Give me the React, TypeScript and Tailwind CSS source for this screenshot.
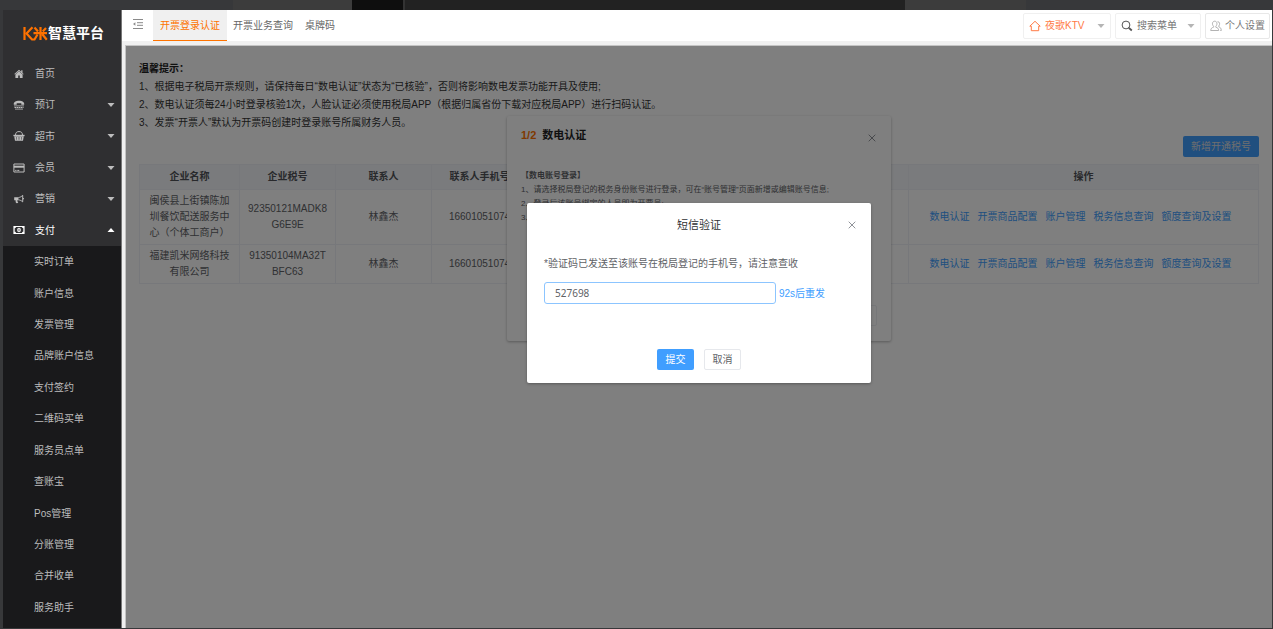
import React from 'react';

const menu = [
  { label: '首页', icon: HomeIcon },
  { label: '预订', icon: PhoneIcon, arrow: true },
  { label: '超市', icon: BasketIcon, arrow: true },
  { label: '会员', icon: CardIcon, arrow: true },
  { label: '营销', icon: HornIcon, arrow: true },
  { label: '支付', icon: MoneyIcon, arrow: true, open: true },
];

const payMenu = [
  '实时订单', '账户信息', '发票管理', '品牌账户信息', '支付签约', '二维码买单',
  '服务员点单', '查账宝', 'Pos管理', '分账管理', '合并收单', '服务助手',
];

const companies = [
  { name: '闽侯县上街镇陈加圳餐饮配送服务中心（个体工商户）', taxNo: '92350121MADK8G6E9E', contact: '林鑫杰', phone: '16601051074' },
  { name: '福建凯米网络科技有限公司', taxNo: '91350104MA32TBFC63', contact: '林鑫杰', phone: '16601051074' },
];

const actions = ['数电认证', '开票商品配置', '账户管理', '税务信息查询', '额度查询及设置'];

export default function App() {
  return (
    <div className="flex min-h-screen flex-col bg-[#37383a] pr-px pb-px pl-[3px] font-['Liberation_Sans','Noto_Sans_CJK_SC',sans-serif] text-[10px]">
      <WindowStrip />
      <div className="flex grow">
        <Sidebar />
        <div className="flex min-w-0 grow flex-col bg-[#f0f0f0]">
          <Header />
          <main className="relative mt-1 ml-[3px] grow border-t border-l border-[#c4c4c4] bg-white">
            <InvoicePage />
            <AuthDialog />
            <div className="absolute inset-0 bg-black/50" />
            <SmsDialog />
          </main>
        </div>
      </div>
    </div>
  );
}

function WindowStrip() {
  return (
    <div className="-mr-px -ml-[3px] flex h-[10px] bg-[#37383a]">
      <div className="w-[233px]" />
      <div className="w-[119px] bg-[#3c3c3c]" />
      <div className="w-[51px] bg-[#0e0e0e]" />
      <div className="w-[2px] bg-[#333]" />
      <div className="w-[500px] bg-[#222]" />
      <div className="w-[121px] bg-[#3c3c3c]" />
    </div>
  );
}

function Sidebar() {
  return (
    <aside className="w-[119px] shrink-0 border-r border-[#777] bg-[#19191b]">
      <div className="bg-[#2f2f31]">
        <div className="flex h-12 items-center pb-[2px] pl-5">
          <Logo />
          <span className="text-[14px] font-bold text-white">智慧平台</span>
        </div>
        <ul className="grid h-[188px]">
          {menu.map(({ label, icon: Icon, arrow, open }) => (
            <li key={label} className="grid">
              <button type="button" className={`flex items-center pr-[6px] pl-[10px] ${open ? 'text-white' : 'text-[#bdbdbd]'}`}>
                <Icon />
                <span className="ml-[10px] grow text-left">{label}</span>
                {arrow && <Caret className={open ? 'rotate-180' : ''} />}
              </button>
            </li>
          ))}
        </ul>
      </div>
      <ul className="grid h-[377px]">
        {payMenu.map((label) => (
          <li key={label} className="grid">
            <a href="#" className="flex items-center pl-[31px] text-[#bdbdbd]">{label}</a>
          </li>
        ))}
      </ul>
    </aside>
  );
}

function Header() {
  return (
    <header className="flex h-[31px] items-center bg-white text-[#666]">
      <button type="button" aria-label="收起菜单" className="flex w-[31px] justify-center pb-1">
        <svg viewBox="0 0 12 12" className="size-3" fill="none" stroke="#8a8a8a">
          <path d="M1 1.5h10M5 4.7h6M5 7.3h6M1 10.5h10" />
          <path d="M3.4 4.2v3.6L1 6z" fill="#8a8a8a" stroke="none" />
        </svg>
      </button>
      <nav className="flex h-full grow">
        <a href="#" className="flex items-center border-b border-[#fe7300] bg-[#f0f0f0] px-[7px] text-[#fe7300]">开票登录认证</a>
        <a href="#" className="flex items-center px-[6px]">开票业务查询</a>
        <a href="#" className="flex items-center px-[6px]">桌牌码</a>
      </nav>
      <div className="flex gap-1 pr-[2px]">
        <button type="button" className="flex h-[26px] w-[88px] items-center rounded-xs border border-[#f0f0f0] px-[5px] text-[#ff7a45]">
          <svg viewBox="0 0 12 12" className="size-3" fill="none" stroke="currentColor">
            <path d="M.8 6.200 6 1.300l5.200 4.900H9.700v4.500H2.300V6.200z" strokeLinejoin="round" />
          </svg>
          <span className="ml-1 grow text-left">夜歌KTV</span>
          <Caret className="text-[#b5b5b5]" />
        </button>
        <button type="button" className="flex h-[26px] w-[86px] items-center rounded-xs border border-[#f0f0f0] px-[5px] text-[#777]">
          <svg viewBox="0 0 12 12" className="size-3" fill="none" stroke="#555">
            <circle cx="5" cy="5" r="3.900" />
            <path d="m7 7.500.9.4" />
            <path d="M8 8l2.800 2.500" strokeWidth="1.700" />
          </svg>
          <span className="ml-1 grow text-left">搜索菜单</span>
          <Caret className="text-[#b5b5b5]" />
        </button>
        <button type="button" className="flex h-[26px] items-center rounded-xs border border-[#e8e8e8] px-1 text-[#777]">
          <svg viewBox="0 0 12 12" className="mr-[3px] size-3" fill="none" stroke="#aaa" strokeWidth=".9">
            <path d="M3.600 6.300v.9C1.800 7.600.9 8.400.7 10.500h8c-.2-2.100-1.100-2.900-2.900-3.300v-.9C7.700 4.400 7.200 1.200 4.700 1.200S1.700 4.400 3.600 6.300z" />
            <path d="M7.600 1.600c2.200 0 2.600 2.800 1.200 4.400v.8c1.600.5 2.400 1.600 2.500 3.700h-1" />
          </svg>
          个人设置
        </button>
      </div>
    </header>
  );
}

function InvoicePage() {
  return (
    <div className="px-[13px] pt-[14px]">
      <div className="leading-[18px] text-[#333]">
        <p className="font-bold text-[#222]">温馨提示：</p>
        <p>1、根据电子税局开票规则，请保持每日“数电认证”状态为“已核验”，否则将影响数电发票功能开具及使用;</p>
        <p>2、数电认证须每24小时登录核验1次，人脸认证必须使用税局APP（根据归属省份下载对应税局APP）进行扫码认证。</p>
        <p>3、发票“开票人”默认为开票码创建时登录账号所属财务人员。</p>
      </div>
      <div className="mt-1 flex justify-end">
        <button type="button" className="h-[21px] rounded-xs bg-[#409eff] px-2 text-[#ddd]">新增开通税号</button>
      </div>
      <table className="mt-[7px] w-full table-fixed border-collapse text-center leading-4 text-[#606266]">
        <colgroup>
          <col className="w-[100px]" />
          <col className="w-24" />
          <col className="w-24" />
          <col className="w-24" />
          <col />
          <col className="w-[350px]" />
        </colgroup>
        <thead>
          <tr className="h-[25px] bg-[#f5f7fa] text-[#505358]">
            {['企业名称', '企业税号', '联系人', '联系人手机号', '', '操作'].map((title) => (
              <th key={title} className="border border-[#eff1f6] whitespace-nowrap">{title}</th>
            ))}
          </tr>
        </thead>
        <tbody>
          {companies.map((row) => (
            <tr key={row.taxNo}>
              <td className="border border-[#eff1f6] px-[9px] py-[3px]">{row.name}</td>
              <td className="border border-[#eff1f6] px-[7px] break-all">{row.taxNo}</td>
              <td className="border border-[#eff1f6]">{row.contact}</td>
              <td className="border border-[#eff1f6]">{row.phone}</td>
              <td className="border border-[#eff1f6]" />
              <td className="border border-[#eff1f6] pr-[6px]">
                <div className="flex justify-center gap-2 text-[#409eff]">
                  {actions.map((action) => (
                    <a key={action} href="#">{action}</a>
                  ))}
                </div>
              </td>
            </tr>
          ))}
        </tbody>
      </table>
    </div>
  );
}

/* First step dialog, stays behind the SMS check */
function AuthDialog() {
  return (
    <section className="absolute top-[70px] left-1/3 ml-[-1px] h-[225px] w-96 rounded-xs bg-white px-[14px] pt-[11px] shadow-[0_1px_3px_rgba(0,0,0,0.3)]">
      <div className="flex items-start justify-between">
        <h2 className="text-[11px] leading-4 font-bold text-[#222]">
          <span className="mr-[6px] text-[#fe7300]">1/2</span>数电认证
        </h2>
        <button type="button" aria-label="关闭" className="mt-[7px] mr-px">
          <CloseIcon />
        </button>
      </div>
      <div className="mt-[26px] text-[8px] leading-[14px] text-[#606266]">
        <p className="font-bold">【数电账号登录】</p>
        <p>1、请选择税局登记的税务身份账号进行登录，可在“账号管理”页面新增或编辑账号信息;</p>
        <p>2、登录后该账号绑定的人员即为开票员;</p>
        <p>3、</p>
      </div>
      <div className="mt-20 flex justify-end">
        <button type="button" aria-label="取消" className="h-[21px] w-[37px] rounded-xs border border-[#eceef2]" />
      </div>
    </section>
  );
}

function SmsDialog() {
  return (
    <section role="dialog" aria-labelledby="sms-title" className="absolute top-[157px] left-[401px] w-[344px] rounded-xs bg-white px-[17px] pt-[14px] pb-[13px] text-[#606266] shadow-[0_1px_3px_rgba(0,0,0,0.3)]">
      <h2 id="sms-title" className="text-center text-[11px] leading-4 text-[#303133]">短信验证</h2>
      <button type="button" aria-label="关闭" className="absolute top-[18px] right-[15px]">
        <CloseIcon />
      </button>
      <label htmlFor="sms-code" className="mt-[23px] block leading-4">*验证码已发送至该账号在税局登记的手机号，请注意查收</label>
      <div className="mt-[10px] flex items-center gap-[3px]">
        <input id="sms-code" defaultValue="527698" className="h-[22px] w-[232px] rounded-[3px] border border-[#8cc5ff] px-[10px] font-['Noto_Sans',sans-serif] outline-none" />
        <button type="button" className="text-[#409eff]">92s后重发</button>
      </div>
      <div className="mt-[45px] flex justify-center gap-[10px]">
        <button type="button" className="h-[21px] w-[37px] rounded-xs bg-[#409eff] text-white">提交</button>
        <button type="button" className="h-[21px] w-[37px] rounded-xs border border-[#e6e8ec]">取消</button>
      </div>
    </section>
  );
}

function Logo() {
  return (
    <svg viewBox="0 0 25 15" className="h-[15px] w-[25px]" fill="none" stroke="#ff7200" strokeWidth="2.200">
      <path d="M1.500 1v13" />
      <path d="M9.500 1.200 3.500 7.500 9 13.500h2.500l3-5" />
      <path d="M10.500 7.200H24M17.500 1v13M11.500 1.500l3.500 4M23 2l-3.200 3.500M23.800 13.800l-4.500-5.500" />
    </svg>
  );
}

function MenuIcon({ children }: { children: React.ReactNode }) {
  return (
    <svg viewBox="0 0 12 10" className="h-[10px] w-3" fill="none" stroke="currentColor">
      {children}
    </svg>
  );
}

function HomeIcon() {
  return (
    <MenuIcon>
      <path d="M6 .8 1.300 5l.6.6L6 2l4.100 3.600.6-.6L9.500 3.900V1.300H8.200v1.400z" fill="currentColor" stroke="none" />
      <path d="M6 2.200 2.400 5.400V9h2.800V6.500h1.600V9h2.800V5.400z" fill="currentColor" stroke="none" />
    </MenuIcon>
  );
}

function PhoneIcon() {
  return (
    <MenuIcon>
      <path d="M.8 4.800C.3 1.800 3 .7 6 .7s5.700 1.100 5.200 4.100H8.300V3.200H3.700v1.600z" fill="currentColor" stroke="none" />
      <path d="M1.200 5.900h9.600M1.500 7.500h9M2.200 9.100h7.600" strokeDasharray="1.600 .4" />
    </MenuIcon>
  );
}

function BasketIcon() {
  return (
    <MenuIcon>
      <path d="M2.500 4C2.700 1.500 3.700.6 6 .6S9.300 1.500 9.500 4" />
      <path d="M.4 3.800h11.200v1.400H.4z" fill="currentColor" stroke="none" />
      <path d="M1.200 5.200h9.600L10 9.700H2zM3.400 6v2.700h.5V6zm2.300 0v2.700h.6V6zm2.400 0v2.700h.5V6z" fill="currentColor" fillRule="evenodd" stroke="none" />
    </MenuIcon>
  );
}

function CardIcon() {
  return (
    <MenuIcon>
      <path d="M.9 1h10.200v8H.9zM2.200 7.400h1.300M4.300 7.400h2" />
      <path d="M.9 2.700h10.200v2H.9z" fill="currentColor" stroke="none" />
    </MenuIcon>
  );
}

function HornIcon() {
  return (
    <MenuIcon>
      <path d="M1.200 3.200h4.300v3H4.400c-.2 1 .3 1.600.9 2.300-.6.8-2 .8-2.400.2C2.700 8 2.500 7.200 2.600 6.200H1.200z" fill="currentColor" stroke="none" />
      <path d="M5.500 3.500c1.700-.2 3-.9 4.200-2.200v6.600C8.500 6.700 7.200 6 5.500 5.900M10.400 4v1.300" />
    </MenuIcon>
  );
}

function MoneyIcon() {
  return (
    <MenuIcon>
      <path d="M.4 1h11.200v8H.4zM3 2.100c0 .7-.6 1.200-1.300 1.200v3.400c.7 0 1.300.5 1.300 1.200h6c0-.7.6-1.200 1.300-1.200V3.300C9.600 3.300 9 2.800 9 2.100z" fill="currentColor" fillRule="evenodd" stroke="none" />
      <ellipse cx="6" cy="5" rx="1.800" ry="2.300" fill="currentColor" stroke="none" />
      <path d="M6 3.700v2.600" stroke="#2f2f31" strokeWidth=".8" />
    </MenuIcon>
  );
}

function Caret({ className = '' }: { className?: string }) {
  return (
    <svg viewBox="0 0 8 4" className={`h-1 w-2 ${className}`} fill="currentColor">
      <path d="M.5 0h7L4 4z" />
    </svg>
  );
}

function CloseIcon() {
  return (
    <svg viewBox="0 0 8 8" className="size-2" fill="none" stroke="#909399">
      <path d="m.7.7 6.600 6.600M7.300.7.7 7.300" />
    </svg>
  );
}
